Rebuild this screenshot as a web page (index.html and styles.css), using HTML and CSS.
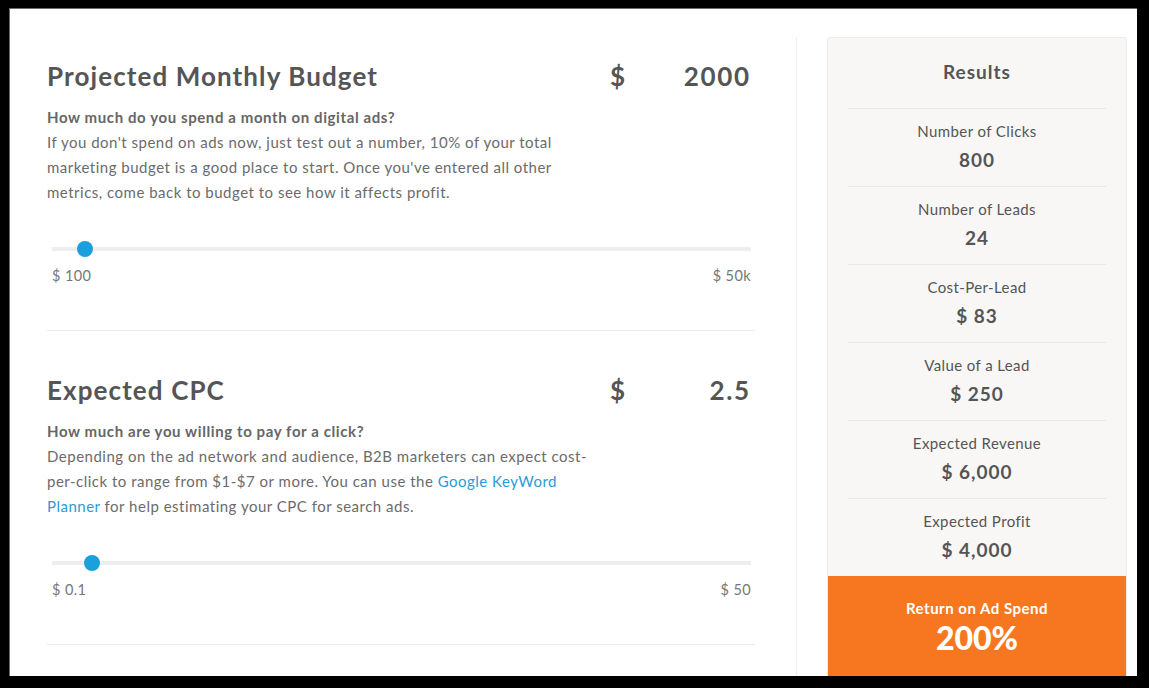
FILE: index.html
```html
<!DOCTYPE html>
<html>
<head>
<meta charset="utf-8">
<link rel="stylesheet" href="styles.css">
</head>
<body>
<div class="frame">
  <div class="main">
    <section class="metric">
      <div class="head">
        <h2 class="title">Projected Monthly Budget</h2>
        <div class="amount"><span class="cur">$</span><span class="num">2000</span></div>
      </div>
      <div class="desc">
        <p class="q">How much do you spend a month on digital ads?</p>
        <p>If you don't spend on ads now, just test out a number, 10% of your total<br>marketing budget is a good place to start. Once you've entered all other<br>metrics, come back to budget to see how it affects profit.</p>
      </div>
      <div class="slider">
        <div class="track"><span class="thumb" style="left:25px"></span></div>
        <div class="range"><span>$ 100</span><span>$ 50k</span></div>
      </div>
    </section>
    <section class="metric">
      <div class="head">
        <h2 class="title">Expected CPC</h2>
        <div class="amount"><span class="cur">$</span><span class="num">2.5</span></div>
      </div>
      <div class="desc">
        <p class="q">How much are you willing to pay for a click?</p>
        <p>Depending on the ad network and audience, B2B marketers can expect cost-<br>per-click to range from $1-$7 or more. You can use the <a href="#">Google KeyWord<br>Planner</a> for help estimating your CPC for search ads.</p>
      </div>
      <div class="slider">
        <div class="track"><span class="thumb" style="left:32px"></span></div>
        <div class="range"><span>$ 0.1</span><span>$ 50</span></div>
      </div>
    </section>
  </div>
  <div class="vline"></div>
  <aside class="results">
    <h3 class="rtitle">Results</h3>
    <div class="rows">
      <div class="row"><div class="label">Number of Clicks</div><div class="value">800</div></div>
      <div class="row"><div class="label">Number of Leads</div><div class="value">24</div></div>
      <div class="row"><div class="label">Cost-Per-Lead</div><div class="value">$ 83</div></div>
      <div class="row"><div class="label">Value of a Lead</div><div class="value">$ 250</div></div>
      <div class="row"><div class="label">Expected Revenue</div><div class="value">$ 6,000</div></div>
      <div class="row"><div class="label">Expected Profit</div><div class="value">$ 4,000</div></div>
    </div>
    <div class="roas">
      <div class="roas-label">Return on Ad Spend</div>
      <div class="roas-value">200%</div>
    </div>
  </aside>
</div>
</body>
</html>
```
FILE: styles.css
```css
* { box-sizing: border-box; }
html, body { margin: 0; padding: 0; }
body {
  background: #000;
  padding: 8px 12px 0 9px;
  font-family: "Lato", "Liberation Sans", sans-serif;
  color: #666;
}
.frame {
  background: #fff;
  border-left: 1px solid #6a6a6a;
  border-top: 1px solid #6a6a6a;
  height: 668px;
  overflow: hidden;
  display: flex;
  align-items: flex-start;
}
.main {
  width: 745px;
  padding: 8px 0 0 37px;
  flex: none;
}
.metric {
  padding: 43px 0 44px;
  border-bottom: 1px solid #ececec;
}
.head {
  display: flex;
  justify-content: space-between;
  align-items: center;
  height: 32px;
}
.title {
  margin: 0;
  font-size: 26px;
  font-weight: 700;
  letter-spacing: 1.1px;
  color: #555;
  line-height: 32px;
}
.amount {
  width: 139px;
  margin-right: 6px;
  display: flex;
  justify-content: space-between;
  font-size: 26px;
  font-weight: 700;
  color: #555;
  line-height: 32px;
}
.amount .num { letter-spacing: 1.6px; margin-right: -1.6px; }
.desc {
  margin-top: 13px;
  width: 580px;
  font-size: 15px;
  line-height: 25px;
  letter-spacing: 0.5px;
  color: #6b6b6b;
}
.desc p { margin: 0; }
.desc .q { font-weight: 700; color: #666; letter-spacing: 0.6px; }
.desc a { color: #2a9bd6; text-decoration: none; }
.slider {
  margin-top: 42px;
  padding: 0 4px 0 5px;
}
.track {
  position: relative;
  height: 4px;
  background: #eeeeee;
}
.thumb {
  position: absolute;
  top: -6px;
  width: 16px;
  height: 16px;
  border-radius: 50%;
  background: #1ba0dd;
}
.range {
  margin-top: 15px;
  display: flex;
  justify-content: space-between;
  font-size: 14.5px;
  line-height: 20px;
  letter-spacing: 0.4px;
  color: #777;
}
.vline {
  flex: none;
  width: 1px;
  margin: 28px 0 0 41px;
  height: 700px;
  background: #eeeeee;
}
.results {
  flex: none;
  width: 300px;
  margin: 28px 0 0 30px;
  background: #f8f7f6;
  border: 1px solid #ececec;
  border-radius: 3px 3px 0 0;
  text-align: center;
  color: #555;
}
.rtitle {
  margin: 0;
  padding: 21px 0 23px;
  font-size: 19px;
  line-height: 26px;
  font-weight: 700;
  letter-spacing: 1px;
  color: #555;
}
.rows { padding: 0 20px; }
.row {
  border-top: 1px solid #e9e8e7;
  padding: 12px 0 13px;
}
.label {
  font-size: 15px;
  line-height: 20px;
  letter-spacing: 0.4px;
  color: #555;
}
.value {
  margin-top: 6px;
  font-size: 19px;
  line-height: 26px;
  font-weight: 700;
  letter-spacing: 1px;
  color: #555;
}
.roas {
  background: #f77721;
  color: #fff;
  padding: 22px 0 40px;
}
.roas-label {
  font-size: 15px;
  line-height: 20px;
  font-weight: 700;
  letter-spacing: 0.5px;
}
.roas-value {
  margin-top: 2px;
  font-size: 32px;
  line-height: 36px;
  font-weight: 900;
}
```
